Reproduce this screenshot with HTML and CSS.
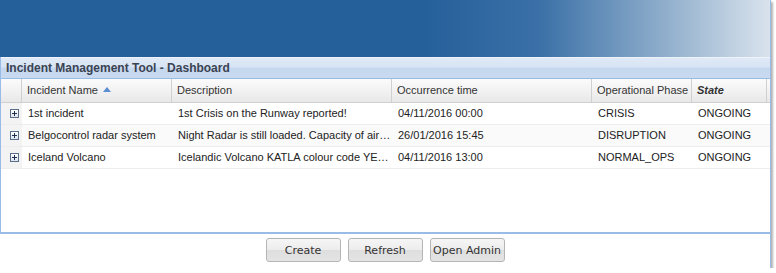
FILE: index.html
```html
<!DOCTYPE html>
<html lang="en">
<head>
    <meta charset="UTF-8">
    <meta name="viewport" content="width=device-width, initial-scale=1.0">
    <title>Incident Management Tool - Dashboard</title>
    <link rel="stylesheet" href="styles.css">
</head>
<body>
    <div class="app">
        <div class="banner"></div>

        <div class="panel">
            <div class="panel-title">Incident Management Tool - Dashboard</div>

            <div class="grid">
                <div class="grid-row grid-head">
                    <div class="cell expander"></div>
                    <div class="cell">Incident Name <span class="sort-asc"></span></div>
                    <div class="cell">Description</div>
                    <div class="cell">Occurrence time</div>
                    <div class="cell">Operational Phase</div>
                    <div class="cell state-head">State</div>
                </div>

                <div class="grid-body">
                    <div class="grid-row">
                        <div class="cell expander"><span class="plus"></span></div>
                        <div class="cell">1st incident</div>
                        <div class="cell">1st Crisis on the Runway reported!</div>
                        <div class="cell">04/11/2016 00:00</div>
                        <div class="cell">CRISIS</div>
                        <div class="cell">ONGOING</div>
                    </div>
                    <div class="grid-row alt">
                        <div class="cell expander"><span class="plus"></span></div>
                        <div class="cell">Belgocontrol radar system</div>
                        <div class="cell">Night Radar is still loaded. Capacity of aircraft movements reduced</div>
                        <div class="cell">26/01/2016 15:45</div>
                        <div class="cell">DISRUPTION</div>
                        <div class="cell">ONGOING</div>
                    </div>
                    <div class="grid-row">
                        <div class="cell expander"><span class="plus"></span></div>
                        <div class="cell">Iceland Volcano</div>
                        <div class="cell">Icelandic Volcano KATLA colour code YELLOW raised</div>
                        <div class="cell">04/11/2016 13:00</div>
                        <div class="cell">NORMAL_OPS</div>
                        <div class="cell">ONGOING</div>
                    </div>
                </div>
            </div>
        </div>

        <div class="toolbar">
            <button class="btn">Create</button>
            <button class="btn">Refresh</button>
            <button class="btn">Open Admin</button>
        </div>
    </div>
</body>
</html>
```

FILE: styles.css
```css
body {
    margin: 0;
    background: #fff;
    font-family: "Liberation Sans", Arial, sans-serif;
    font-size: 11px;
    color: #222;
}
.app {
    width: 770px;
    height: 268px;
    background: #fff;
    border-right: 1px solid #99bbe8;
    box-shadow: 2px 2px 2px rgba(0,0,0,0.3);
    display: flex;
    flex-direction: column;
}
.banner {
    height: 57px;
    background: linear-gradient(to right, #26609a 0%, #26609a 55%, #3a70a7 70%, #8eadcb 86%, #d9e3ed 100%);
}
.panel {
    border-left: 1px solid #99bbe8;
    border-bottom: 2px solid #99bbe8;
    display: flex;
    flex-direction: column;
    height: 175px;
}
.panel-title {
    height: 20px;
    line-height: 21px;
    padding-left: 5px;
    font-weight: bold;
    font-size: 12px;
    color: #3b4352;
    border-top: 1px solid #eef3fa;
    border-bottom: 1px solid #99bbe8;
    background: linear-gradient(to bottom, #dfe9f6 0%, #d8e4f4 45%, #c6d8ef 50%, #c9daf0 100%);
}
.grid {
    flex: 1;
    display: flex;
    flex-direction: column;
}
.grid-row {
    display: grid;
    grid-template-columns: 21px 150px 220px 200px 100px 75px;
    height: 21px;
    border-bottom: 1px solid #ededed;
    align-items: center;
}
.grid-row.alt {
    background: #fafafa;
}
.cell {
    padding-left: 6px;
    white-space: nowrap;
    overflow: hidden;
    text-overflow: ellipsis;
    height: 100%;
    line-height: 21px;
}
.grid-head {
    height: 23px;
    border-bottom: 1px solid #d0d0d0;
    background: linear-gradient(to bottom, #fbfbfb 0%, #f2f2f2 50%, #e8e8e8 100%);
    color: #333;
}
.grid-head .cell {
    line-height: 23px;
    border-right: 1px solid #d0d0d0;
    padding-left: 5px;
}
.grid-head .expander {
    background: none;
}
.state-head {
    font-weight: bold;
    font-style: italic;
}
.sort-asc {
    display: inline-block;
    width: 0;
    height: 0;
    border-left: 4px solid transparent;
    border-right: 4px solid transparent;
    border-bottom: 5px solid #5b8ed1;
    margin-left: 2px;
    vertical-align: 2px;
}
.grid-body {
    flex: 1;
}
.grid-body .grid-row {
    height: 21px;
}
.grid-body .cell {
    padding-left: 6px;
}
.expander {
    padding: 0;
    background: #f3f3f3;
    display: flex;
    align-items: center;
    justify-content: center;
}
.plus {
    width: 7px;
    height: 7px;
    border: 1px solid #5a6e8c;
    background: linear-gradient(#fff, #dde4ee);
    position: relative;
}
.plus::before,
.plus::after {
    content: "";
    position: absolute;
    background: #1c2f4f;
}
.plus::before {
    left: 1px;
    top: 3px;
    width: 5px;
    height: 1px;
}
.plus::after {
    left: 3px;
    top: 1px;
    width: 1px;
    height: 5px;
}
.toolbar {
    flex: 1;
    display: flex;
    justify-content: center;
    gap: 7px;
    padding-top: 4px;
}
.btn {
    width: 75px;
    height: 24px;
    border: 1px solid #b5b5b5;
    border-radius: 3px;
    background: linear-gradient(to bottom, #f6f6f6 0%, #ececec 50%, #dedede 52%, #e4e4e4 100%);
    font-family: "DejaVu Sans", Tahoma, sans-serif;
    font-size: 11px;
    color: #333;
    padding: 0;
    cursor: pointer;
}
```
